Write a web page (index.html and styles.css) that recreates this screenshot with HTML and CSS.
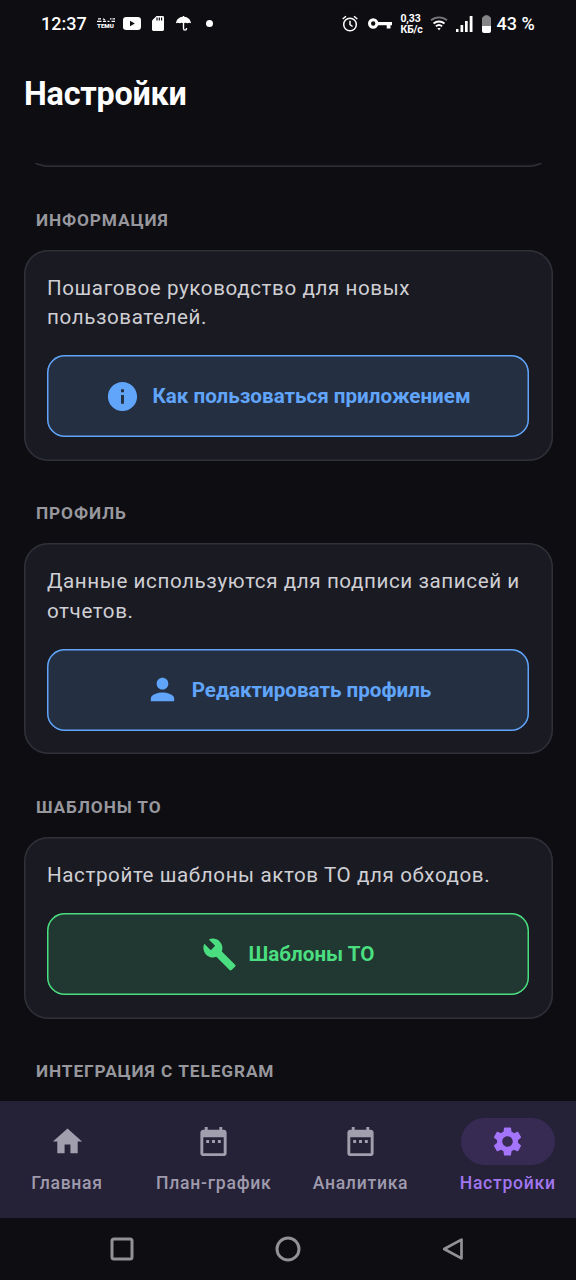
FILE: index.html
```html
<!DOCTYPE html>
<html lang="ru">
<head>
<meta charset="utf-8">
<title>Настройки</title>
<link rel="stylesheet" href="styles.css">
</head>
<body>
<div class="screen">
  <div class="status">
    <span class="time">12:37</span>
    <span class="temu"><svg width="18" height="4" viewBox="0 0 18 4" fill="none" stroke="#fff" stroke-width="1.200"><path d="M1 .8h3M0 3.300h4.500M6 .8l2 1.200M6 3.300h3M10.500 3.300h2M13 .8h1.500M15.500 .8H18M14.500 3.300H18"/></svg><b>TEMU</b></span>
    <svg class="yt" width="18" height="13" viewBox="0 0 18 13"><rect width="18" height="13" rx="3.2" fill="#fff"/><path d="M7 3.8v5.4l4.8-2.7z" fill="#0d0d12"/></svg>
    <svg class="sd" width="12" height="15" viewBox="0 0 12 15"><path d="M4.5 0H10.6Q12 0 12 1.4V13.6Q12 15 10.600 15H1.400Q0 15 0 13.600V4.500z" fill="#fff"/><path d="M5 1.500v3M7.300 1.500v3M9.600 1.500v3" stroke="#0d0d12" stroke-width="1.200"/></svg>
    <svg class="umb" width="15" height="15" viewBox="0 0 15 15"><path d="M0 7.300C.3 3.500 3.300 1 6.800.8V0h1.400v.8C11.700 1 14.700 3.500 15 7.300q-1.900-1-3.700 0-1.900-1-3.800 0-1.900-1-3.800 0-1.800-1-3.700 0z" fill="#fff"/><path d="M7.500 6v6.500c0 2.200 3 2.200 3 0v-.5" fill="none" stroke="#fff" stroke-width="1.400"/></svg>
    <i class="dot"></i>
    <span class="fill"></span>
    <svg class="alarm" width="16" height="17" viewBox="0 0 16 17" fill="none" stroke="#fff" stroke-width="1.500"><circle cx="8" cy="9.500" r="6.300"/><path d="M8 5.700v4l2.600 1.800M.7 4L4 1.200M15.300 4L12 1.200"/></svg>
    <svg class="key" width="24" height="12" viewBox="0 0 24 12"><circle cx="5.200" cy="5.500" r="3.700" fill="none" stroke="#fff" stroke-width="3"/><path d="M9 4h15v3.200h-1.500V10.500h-3.800V7.200H9z" fill="#fff"/></svg>
    <span class="speed">0,33<br>КБ/с</span>
    <svg class="wifi" width="18" height="15" viewBox="0 0 18 15" fill="none" stroke="#fff" stroke-width="1.800"><path d="M1 4.200C5.500.3 12.500.3 17 4.200" stroke="#77777b"/><path d="M3.500 7.500c3.200-2.700 7.800-2.700 11 0M5.900 10.300c1.800-1.500 4.400-1.500 6.200 0"/><path d="M7.300 12.100h3.400L9 14.500z" fill="#fff" stroke="none"/></svg>
    <svg class="signal" width="17" height="16" viewBox="0 0 17 16" fill="#fff"><path d="M0 13h2.500v3H0zM4.500 9h2.700v7H4.500zM9 5h2.700v11H9zM13.700 0h2.800v16h-2.800z"/></svg>
    <svg class="batt" width="9" height="18" viewBox="0 0 9 18"><path d="M0 11V3.500Q0 2 1.500 1.500L3 .3h3L7.500 1.500Q9 2 9 3.500V11z" fill="#858588"/><path d="M0 11h9v5q0 2-2 2H2q-2 0-2-2z" fill="#fff"/></svg>
    <span class="pct">43 %</span>
  </div>
  <header class="header"><h1>Настройки</h1></header>
  <main class="content">
    <div class="card card-tail"></div>
    <h2>ИНФОРМАЦИЯ</h2>
    <section class="card">
      <p>Пошаговое руководство для новых пользователей.</p>
      <button class="btn blue"><svg viewBox="0 0 24 24"><path d="M12 2C6.480 2 2 6.480 2 12s4.480 10 10 10 10-4.480 10-10S17.520 2 12 2zm1 15h-2v-6h2v6zm0-8h-2V7h2v2z"/></svg><span>Как пользоваться приложением</span></button>
    </section>
    <h2>ПРОФИЛЬ</h2>
    <section class="card">
      <p>Данные используются для подписи записей и отчетов.</p>
      <button class="btn blue"><svg viewBox="0 0 24 24"><path d="M12 12c2.210 0 4-1.790 4-4s-1.790-4-4-4-4 1.790-4 4 1.790 4 4 4zm0 2c-2.670 0-8 1.340-8 4v2h16v-2c0-2.660-5.330-4-8-4z"/></svg><span>Редактировать профиль</span></button>
    </section>
    <h2>ШАБЛОНЫ ТО</h2>
    <section class="card">
      <p>Настройте шаблоны актов ТО для обходов.</p>
      <button class="btn green"><svg viewBox="0 0 24 24"><path d="M22.700 19l-9.100-9.100c.9-2.300.4-5-1.500-6.900-2-2-5-2.400-7.400-1.300L9 6 6 9 1.600 4.700C.4 7.100.9 10.100 2.900 12.100c1.900 1.900 4.600 2.400 6.900 1.500l9.100 9.100c.4.4 1 .4 1.400 0l2.300-2.300c.5-.4.5-1.100.1-1.400z"/></svg><span>Шаблоны ТО</span></button>
    </section>
    <h2>ИНТЕГРАЦИЯ С TELEGRAM</h2>
  </main>
  <nav class="tabs">
    <a class="tab"><span class="pill"><svg viewBox="0 0 24 24"><path d="M10 20v-6h4v6h5v-8h3L12 3 2 12h3v8z"/></svg></span>Главная</a>
    <a class="tab"><span class="pill"><svg viewBox="0 0 24 24"><path d="M9 11H7v2h2v-2zm4 0h-2v2h2v-2zm4 0h-2v2h2v-2zm2-7h-1V2h-2v2H8V2H6v2H5c-1.110 0-1.990.9-1.990 2L3 20c0 1.100.89 2 2 2h14c1.100 0 2-.9 2-2V6c0-1.100-.9-2-2-2zm0 16H5V9h14v11z"/></svg></span>План-график</a>
    <a class="tab"><span class="pill"><svg viewBox="0 0 24 24"><path d="M9 11H7v2h2v-2zm4 0h-2v2h2v-2zm4 0h-2v2h2v-2zm2-7h-1V2h-2v2H8V2H6v2H5c-1.110 0-1.990.9-1.990 2L3 20c0 1.100.89 2 2 2h14c1.100 0 2-.9 2-2V6c0-1.100-.9-2-2-2zm0 16H5V9h14v11z"/></svg></span>Аналитика</a>
    <a class="tab active"><span class="pill"><svg viewBox="0 0 24 24"><path d="M19.140 12.940c.04-.3.06-.61.06-.94 0-.32-.02-.64-.07-.94l2.030-1.580c.18-.14.23-.41.12-.61l-1.920-3.320c-.12-.22-.37-.29-.59-.22l-2.390.96c-.5-.38-1.030-.7-1.620-.94l-.36-2.540c-.04-.24-.24-.41-.48-.41h-3.840c-.24 0-.43.17-.47.41l-.36 2.540c-.59.24-1.130.57-1.620.94l-2.390-.96c-.22-.08-.47 0-.59.22L2.740 8.870c-.12.21-.08.47.12.61l2.030 1.580c-.05.3-.09.63-.09.94s.02.64.07.94l-2.030 1.580c-.18.14-.23.41-.12.61l1.920 3.320c.12.22.37.29.59.22l2.390-.96c.5.38 1.030.7 1.620.94l.36 2.540c.05.24.24.41.48.41h3.840c.24 0 .44-.17.47-.41l.36-2.540c.59-.24 1.130-.56 1.620-.94l2.390.96c.22.08.47 0 .59-.22l1.920-3.320c.12-.22.07-.47-.12-.61l-2.010-1.580zM12 15.600c-1.980 0-3.600-1.620-3.600-3.600s1.620-3.600 3.600-3.600 3.600 1.620 3.600 3.600-1.620 3.600-3.600 3.600z"/></svg></span>Настройки</a>
  </nav>
  <div class="sysnav">
    <svg width="24" height="24" viewBox="0 0 24 24"><rect x="2" y="2" width="20" height="20" rx="2"/></svg>
    <svg width="26" height="26" viewBox="0 0 26 26"><circle cx="13" cy="13" r="11"/></svg>
    <svg class="back" width="24" height="24" viewBox="0 0 24 24"><path d="M20.500 2.600L3.200 12l17.300 9.400z"/></svg>
  </div>
</div>
</body>
</html>
```
FILE: styles.css
```css
* { box-sizing: border-box; }
body { margin: 0; background: #0d0d12; font-family: Roboto, sans-serif; }
.screen { width: 576px; height: 1280px; display: flex; flex-direction: column; overflow: hidden; background: #0d0d12; }
.status { height: 47px; flex: none; display: flex; align-items: center; padding: 0 40px 0 41px; color: #fff; }
.status svg { flex: none; }
.time { font-size: 18px; font-weight: 500; width: 56px; white-space: nowrap; }
.temu { width: 18px; display: flex; flex-direction: column; gap: 1px; }
.temu b { font-size: 6.2px; line-height: 6px; font-weight: 900; white-space: nowrap; }
.yt { margin-left: 8px; }
.sd { margin-left: 11px; }
.umb { margin-left: 12px; }
.dot { width: 7px; height: 7px; border-radius: 50%; background: #fff; margin-left: 15px; }
.fill { flex: 1; }
.alarm { margin-right: 10px; }
.key { margin-right: 9px; }
.speed { font-size: 10.5px; line-height: 11px; font-weight: 700; width: 23px; white-space: nowrap; letter-spacing: -.15px; margin-right: 6px; }
.wifi { margin-right: 8px; }
.signal { margin-right: 9px; }
.batt { margin-right: 6px; }
.pct { font-size: 18px; font-weight: 500; width: 38px; margin-right: 1.500px; white-space: nowrap; }
.header { height: 116px; flex: none; padding: 28px 24px 0; }
h1 { margin: 0; color: #fff; font-size: 32.300px; line-height: 38px; font-weight: 700; letter-spacing: -.22px; }
.content { height: 938px; flex: none; overflow: hidden; padding: 0 23.500px; }
.card { background: #1a1a23; box-shadow: inset 0 0 0 1.500px #303038; border-radius: 24px; padding: 24px 23.500px 23.500px; }
.card-tail { height: 47px; margin-top: -43.100px; background: #111117; }
h2 { margin: 0 0 0 12.500px; padding-top: 34.500px; height: 82.400px; font-size: 17.300px; line-height: 36px; font-weight: 700; color: #97979d; letter-spacing: .88px; }
.card p { margin: 0 0 22.800px; font-size: 20.600px; line-height: 29.400px; letter-spacing: .59px; color: #cfcfd3; }
.btn { width: 100%; height: 82px; border-radius: 17.600px; border: 0; box-shadow: inset 0 0 0 1.500px currentColor; display: flex; align-items: center; justify-content: center; gap: 12px; padding: 0; font: 700 20.600px Roboto, sans-serif; }
.btn svg { width: 35px; height: 35px; fill: currentColor; }
.blue { color: #60a5fa; background: #242f42; }
.green { color: #4ade80; background: #213731; }
.tabs { height: 117px; flex: none; background: #252136; display: grid; grid-template-columns: 134px 159.500px 134px 160.500px; padding-top: 17px; }
.tab { display: flex; flex-direction: column; align-items: center; gap: 6px; font-size: 17.600px; line-height: 24px; font-weight: 500; letter-spacing: .72px; color: #9f9bad; }
.pill { width: 94px; height: 47px; border-radius: 24px; display: flex; align-items: center; justify-content: center; }
.pill svg { width: 35px; height: 35px; fill: #a19fae; }
.active { color: #a176ef; }
.active .pill { background: #382b53; }
.active .pill svg { fill: #a474fa; }
.sysnav { flex: 1; display: flex; justify-content: space-between; align-items: center; padding: 0 111px 0 110px; }
.sysnav svg { fill: none; stroke: #929294; stroke-width: 3; stroke-linejoin: round; }
.sysnav .back { stroke-width: 2.700; }
```
